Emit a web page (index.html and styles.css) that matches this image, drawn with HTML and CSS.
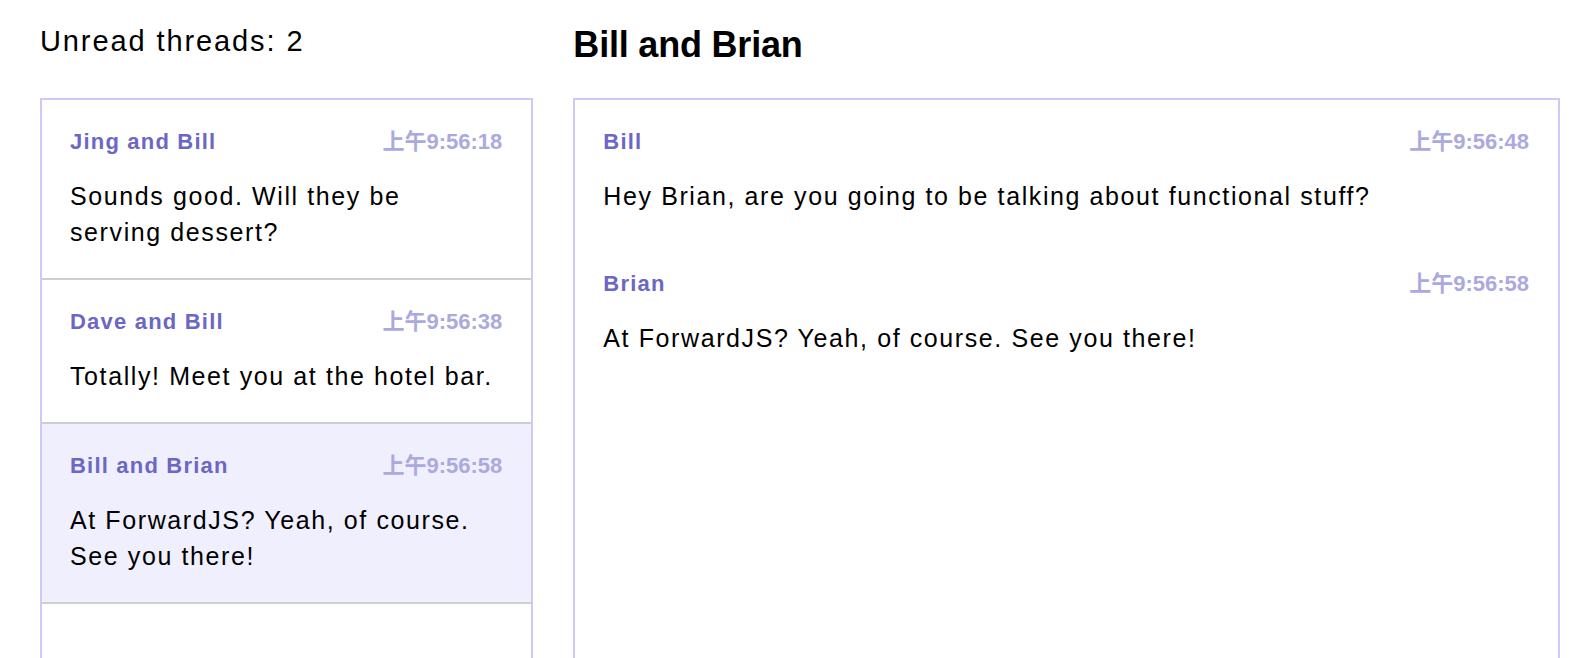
FILE: index.html
```html
<!DOCTYPE html>
<html lang="en">
<head>
<meta charset="utf-8">
<title>Threads</title>
<link rel="stylesheet" href="styles.css">
</head>
<body>
<div class="app">
  <section class="threads">
    <h2 class="unread">Unread threads: 2</h2>
    <ul class="thread-list">
      <li class="thread">
        <div class="meta"><span class="name">Jing and Bill</span><span class="time">上午9:56:18</span></div>
        <p class="text">Sounds good. Will they be serving dessert?</p>
      </li>
      <li class="thread">
        <div class="meta"><span class="name">Dave and Bill</span><span class="time">上午9:56:38</span></div>
        <p class="text">Totally! Meet you at the hotel bar.</p>
      </li>
      <li class="thread active">
        <div class="meta"><span class="name">Bill and Brian</span><span class="time">上午9:56:58</span></div>
        <p class="text">At ForwardJS? Yeah, of course. See you there!</p>
      </li>
    </ul>
  </section>
  <section class="conversation">
    <h2 class="title">Bill and Brian</h2>
    <div class="messages">
      <div class="message">
        <div class="meta"><span class="name">Bill</span><span class="time">上午9:56:48</span></div>
        <p class="text">Hey Brian, are you going to be talking about functional stuff?</p>
      </div>
      <div class="message">
        <div class="meta"><span class="name">Brian</span><span class="time">上午9:56:58</span></div>
        <p class="text">At ForwardJS? Yeah, of course. See you there!</p>
      </div>
    </div>
  </section>
</div>
</body>
</html>
```
FILE: styles.css
```css
html, body {
  margin: 0;
  padding: 0;
  height: 100%;
  overflow: hidden;
  background: #ffffff;
}

body {
  font-family: "Liberation Sans", "Noto Sans CJK SC", sans-serif;
  color: #000000;
}

.app {
  display: grid;
  grid-template-columns: 1fr 2fr;
  column-gap: 40px;
  padding: 0 28px 0 40px;
  height: 100%;
  box-sizing: border-box;
}

.threads, .conversation {
  display: flex;
  flex-direction: column;
  min-width: 0;
}

.unread, .title {
  margin: 0;
  height: 98px;
  box-sizing: border-box;
}

.unread {
  padding-top: 24px;
  font-size: 29px;
  line-height: 34px;
  font-weight: 400;
  letter-spacing: 1.9px;
}

.title {
  padding-top: 23px;
  font-size: 36px;
  line-height: 44px;
  font-weight: 700;
  letter-spacing: -0.2px;
}

.thread-list, .messages {
  flex: 1;
  margin: 0;
  padding: 0;
  list-style: none;
  border: 2px solid #cdcbf6;
  min-height: 700px;
}

.thread {
  padding: 28px 29px 28px 28px;
  border-bottom: 2px solid #cfcfcf;
}

.thread.active {
  background: #f0effd;
}

.message {
  padding: 28px 29px 28px 28px;
}

.meta {
  display: flex;
  justify-content: space-between;
  align-items: baseline;
  font-size: 22px;
  line-height: 27px;
  font-weight: 700;
}

.name {
  color: #6c67c4;
  letter-spacing: 1.2px;
}

.time {
  color: #aba9de;
}

.text {
  margin: 23px 0 0;
  font-size: 25px;
  line-height: 36px;
  letter-spacing: 1.6px;
}

.thread .text {
  margin-right: 3px;
}
```
